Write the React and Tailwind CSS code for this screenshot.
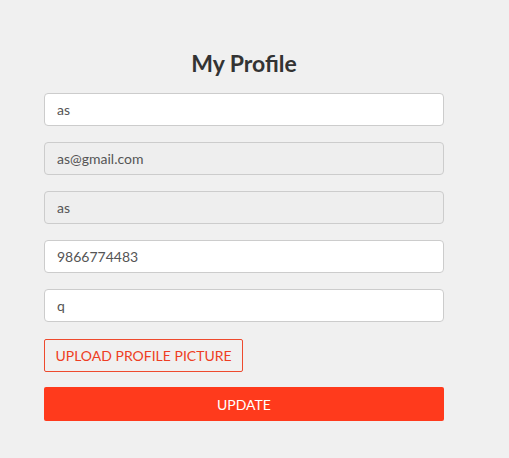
export default function App() {
  const fields = [
    { value: "as", disabled: false },
    { value: "as@gmail.com", disabled: true },
    { value: "as", disabled: true },
    { value: "9866774483", disabled: false },
    { value: "q", disabled: false },
  ];
  return (
    <div className="min-h-[458px] bg-[#f0f0f0] font-['Lato',sans-serif]">
      <div className="ml-[44px] w-[400px] pt-[49px]">
        <h2 className="mb-[16px] text-center text-[23px] font-bold leading-[28px] text-[#333]">
          My Profile
        </h2>
        <div className="flex flex-col gap-[16px]">
          {fields.map((f, i) => (
            <input
              key={i}
              defaultValue={f.value}
              disabled={f.disabled}
              className={`h-[33px] w-full rounded-[4px] border border-[#ccc] px-[12px] text-[14px] text-[#555] outline-none ${
                f.disabled ? "bg-[#eee]" : "bg-white"
              }`}
            />
          ))}
        </div>
        <button className="mt-[17px] h-[33px] w-[199px] rounded-[2px] border border-[#ee4a2e] bg-transparent text-[14px] text-[#ee3d23]">
          UPLOAD PROFILE PICTURE
        </button>
        <button className="mt-[15px] block h-[34px] w-full rounded-[2px] bg-[#ff3a1c] text-[14px] text-white">
          UPDATE
        </button>
      </div>
    </div>
  );
}
